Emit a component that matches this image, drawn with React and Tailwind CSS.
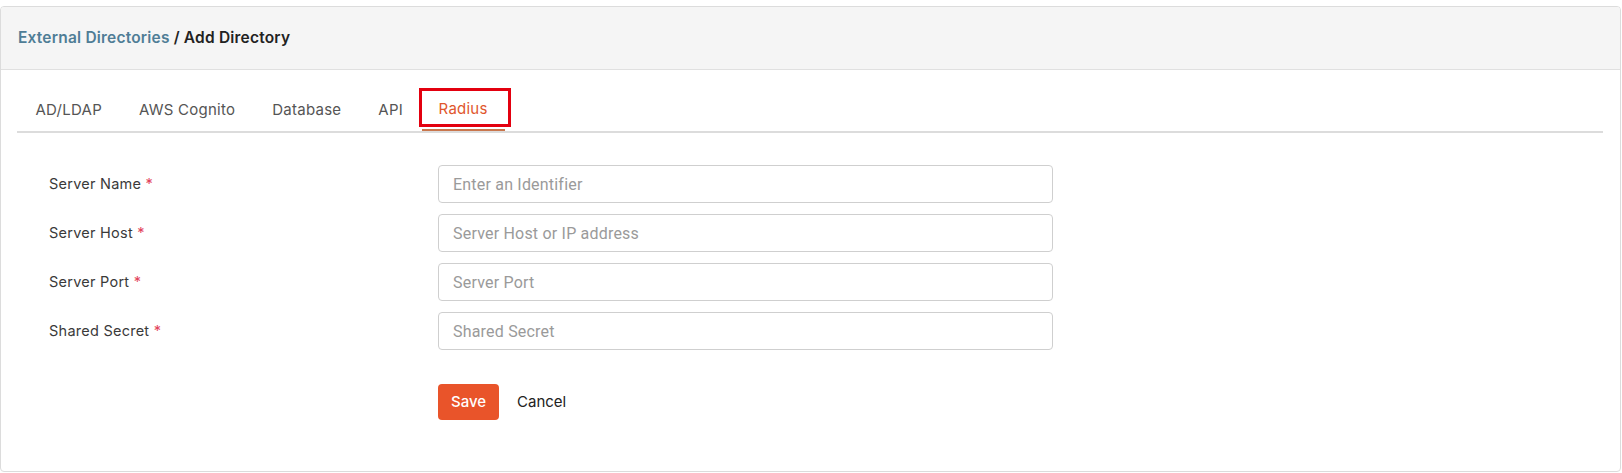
import React from "react";

const tabs = ["AD/LDAP", "AWS Cognito", "Database", "API", "Radius"];
const fields = [
  { label: "Server Name", ph: "Enter an Identifier" },
  { label: "Server Host", ph: "Server Host or IP address" },
  { label: "Server Port", ph: "Server Port" },
  { label: "Shared Secret", ph: "Shared Secret" },
];

export default function App() {
  return (
    <div className="bg-white pt-[6px] pr-[1px] h-[473px] font-['Inter',sans-serif]">
      <div className="border border-[#dcdcdc] rounded-[4px] h-[466px] overflow-hidden">
        <div className="h-[63px] bg-[#f5f5f5] border-b border-[#e0e0e0] flex items-center pl-[17px] text-[15.5px] tracking-[0.2px] font-semibold">
          <span className="text-[#4f7d96]">External Directories</span>
          <span className="text-[#222] ml-[4px]">/ Add Directory</span>
        </div>
        <div className="pl-[16px] pr-[17px] pt-[19px]">
          <div className="flex border-b-2 border-[#dcdcdc]">
            {tabs.map((t) => {
              const active = t === "Radius";
              return (
                <div
                  key={t}
                  className={
                    active
                      ? "relative h-[42px] -mb-[2px] px-[17px] flex items-center text-[15px] tracking-[0.25px] text-[#e0562c] border-b-2 border-[#c9764c]"
                      : "h-[42px] px-[18.5px] flex items-center text-[15px] tracking-[0.25px] text-[#555]"
                  }
                >
                  {t}
                  {active && (
                    <div className="absolute top-[-1px] bottom-[2px] left-[-3px] right-[-6px] border-[3px] border-[#e3000f]" />
                  )}
                </div>
              );
            })}
          </div>
        </div>
        <div className="pl-[48px] pt-[32px]">
          <div className="flex flex-col gap-[11px]">
            {fields.map((f) => (
              <div key={f.label} className="flex items-center">
                <div className="w-[389px] text-[14.5px] tracking-[0.25px] text-[#3a3a3a]">
                  {f.label} <span className="text-[#e2445c]">*</span>
                </div>
                <input
                  placeholder={f.ph}
                  className="w-[615px] h-[38px] border border-[#cfcfcf] rounded-[4px] px-[14px] text-[16px] tracking-[0.2px] font-['Roboto',sans-serif] placeholder:text-[#9a9a9a] outline-none"
                />
              </div>
            ))}
          </div>
          <div className="flex items-center mt-[34px] ml-[389px]">
            <button className="w-[61px] h-[36px] rounded-[4px] bg-[#e9542a] text-white text-[15px] font-medium">Save</button>
            <span className="ml-[18px] text-[15px] text-[#222]">Cancel</span>
          </div>
        </div>
      </div>
    </div>
  );
}
